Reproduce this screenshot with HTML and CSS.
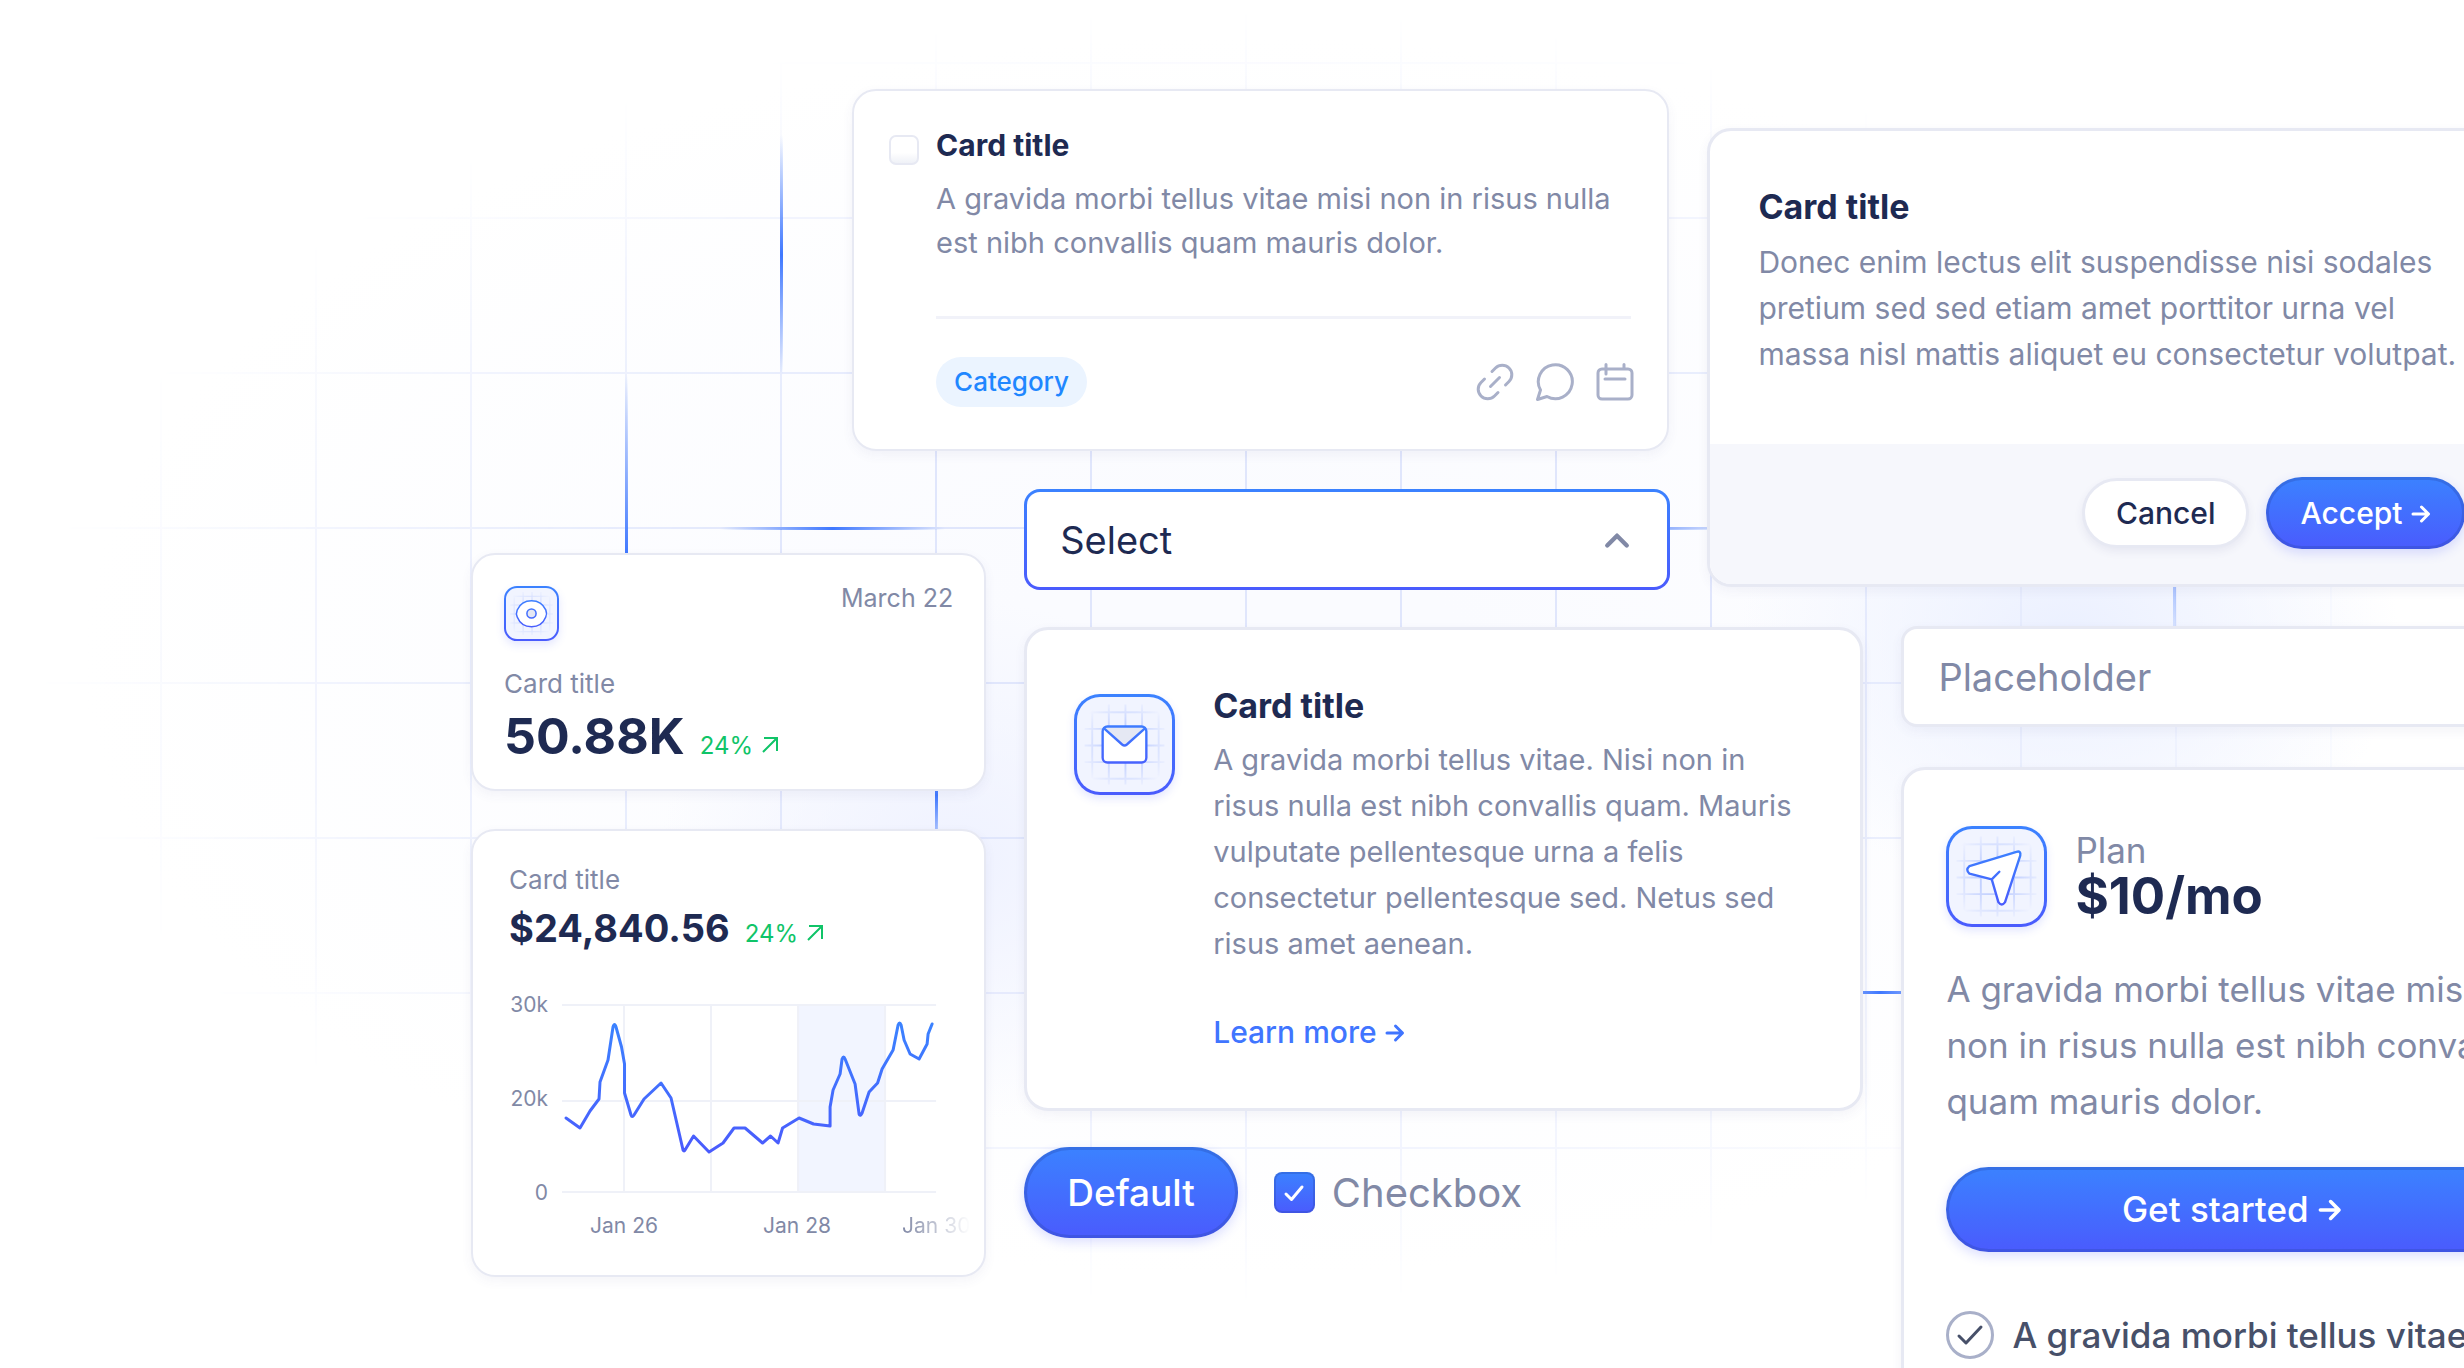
FILE: index.html
```html
<!DOCTYPE html>
<html lang="en">
<head>
<meta charset="utf-8">
<title>Components</title>
<link rel="stylesheet" href="styles.css">
</head>
<body>
<div class="backdrop" aria-hidden="true">
  <div class="lines"></div>
  <span class="beam beam-v beam-one"></span>
  <span class="beam beam-v beam-two"></span>
  <span class="beam beam-v beam-three"></span>
  <span class="beam beam-v beam-four"></span>
  <span class="beam beam-h beam-five"></span>
  <span class="beam beam-h beam-six"></span>
  <span class="beam beam-h beam-seven"></span>
</div>
<svg class="defs" aria-hidden="true">
  <defs>
    <linearGradient id="blue" gradientUnits="userSpaceOnUse" x1="0" y1="20" x2="0" y2="80"><stop offset="0" stop-color="#3b82ff"/><stop offset="1" stop-color="#4a5bfd"/></linearGradient>
    <linearGradient id="series" gradientUnits="userSpaceOnUse" x1="0" y1="20" x2="0" y2="148"><stop offset="0" stop-color="#3b82ff"/><stop offset="1" stop-color="#4a5bfd"/></linearGradient>
    <radialGradient id="fade"><stop offset="0.4" stop-color="#fff"/><stop offset="1" stop-color="#000"/></radialGradient>
    <mask id="soft"><rect width="100" height="100" fill="url(#fade)"/></mask>
    <symbol id="mesh" viewBox="0 0 100 100">
      <path mask="url(#soft)" d="M16 8V92M33.500 8V92M51 8V92M68.500 8V92M86 8V92M8 16H92M8 33.500H92M8 51H92M8 68.500H92M8 86H92" fill="none" stroke="#c3d1ff" stroke-width="2"/>
    </symbol>
    <symbol id="arrow" viewBox="0 0 20 20"><path d="M2 10H17M10.500 3L17.500 10L10.500 17" fill="none" stroke="currentColor" stroke-width="3" stroke-linecap="round" stroke-linejoin="round"/></symbol>
    <symbol id="rise" viewBox="0 0 18 18"><path d="M2 16L16 2M3 2H16V15" fill="none" stroke="currentColor" stroke-width="2"/></symbol>
  </defs>
</svg>

<main class="stage">
  <div class="cluster">
    <article class="card task">
      <input class="tick" type="checkbox" id="task" aria-label="Card title">
      <div class="task-main">
        <h2 class="title small"><label for="task">Card title</label></h2>
        <p class="text">A gravida morbi tellus vitae misi non in risus nulla est nibh convallis quam mauris dolor.</p>
        <div class="task-foot">
          <span class="tag">Category</span>
          <div class="tools">
            <button class="tool" type="button" aria-label="Link"><svg viewBox="0 0 40 40"><path d="M17 9.500L20.500 6A8.800 8.800 0 0 1 34 19.500L30.500 23M23 30.500L19.500 34A9 9 0 0 1 6 20.500L9.500 17M15.500 24.500L24.500 15.500"/></svg></button>
            <button class="tool" type="button" aria-label="Comment"><svg viewBox="0 0 40 40"><path d="M2.500 37.500L5.500 28A17 17 0 1 1 12 34.500Z"/></svg></button>
            <button class="tool" type="button" aria-label="Calendar"><svg viewBox="0 0 40 40"><path d="M7 7H33A4 4 0 0 1 37 11V33A4 4 0 0 1 33 37H7A4 4 0 0 1 3 33V11A4 4 0 0 1 7 7ZM11 2.500V12M29 2.500V7M10 17H30"/></svg></button>
          </div>
        </div>
      </div>
    </article>

    <div class="columns">
      <div class="column metrics">
        <article class="card metric">
          <div class="metric-head">
            <span class="badge badge-small"><svg viewBox="0 0 100 100"><use href="#mesh"/><path d="M50 25C66 25 74 34 78 43Q81 50 78 57C74 67 66 76 50 76S26 67 22 57Q19 50 22 43C26 34 34 25 50 25Z" fill="#fff" stroke="url(#blue)" stroke-width="3"/><circle cx="50" cy="50" r="9" fill="#e5e8f3" stroke="url(#blue)" stroke-width="3"/></svg></span>
            <time class="date">March 22</time>
          </div>
          <h3 class="label">Card title</h3>
          <p class="figure"><strong class="number large">50.88K</strong><span class="delta">24% <svg><use href="#rise"/></svg></span></p>
        </article>
        <article class="card revenue">
          <h3 class="label">Card title</h3>
          <p class="figure"><strong class="number">$24,840.56</strong><span class="delta">24% <svg><use href="#rise"/></svg></span></p>
          <div class="chart">
            <div class="axis-y"><span>30k</span><span>20k</span><span>0</span></div>
            <svg class="plot" viewBox="0 0 374 190" preserveAspectRatio="none" role="img" aria-label="Revenue">
              <rect x="236" y="0" width="87" height="189" fill="#f2f5ff"/>
              <path d="M0 1H374M0 97H374M0 188H374M62 0V189M149 0V189M236 0V189M323 0V189" stroke="#eff1f8" stroke-width="2"/>
              <path d="M4 114L18 124L28 107L37 95L38 78L46 56L51 23Q52.500 18 54 23L59.500 43L62.500 60V89L69 111Q70 114 72 111L82 95L99 79L109 94L121 146Q122 148 123 146L131.500 132L147 148L161 139L172 124H183L200.500 139L208.500 132L216 139L220.500 124L237 114L251.500 120L268 122V103L271 86L278 70L280 55Q281.500 51 283 55L293 80L297 110Q298 113 300 109L307 88L315.500 79L320 65L331 46L336 21Q337.500 17 339 21L342 36L348 50L357 55L365 40L366 30L370 20" fill="none" stroke="url(#series)" stroke-width="3" stroke-linejoin="round" stroke-linecap="round"/>
            </svg>
            <div class="axis-x"><span>Jan 26</span><span>Jan 28</span><span class="last">Jan 30</span></div>
          </div>
        </article>
      </div>

      <div class="column">
        <div class="picker">
          <select class="select" aria-label="Select"><option>Select</option></select>
          <svg class="chevron" viewBox="0 0 24 16"><path d="M3 13L12 4L21 13" fill="none" stroke="currentColor" stroke-width="4" stroke-linecap="round" stroke-linejoin="round"/></svg>
        </div>
        <article class="card feature">
          <span class="badge"><svg viewBox="0 0 100 100"><use href="#mesh"/><path d="M32 31H68A5 5 0 0 1 73 36V64A5 5 0 0 1 68 69H32A5 5 0 0 1 27 64V36A5 5 0 0 1 32 31Z" fill="#fff"/><path d="M29 32H71L52 50Q50 51.500 48 50Z" fill="#e5e8f3"/><path d="M32 31H68A5 5 0 0 1 73 36V64A5 5 0 0 1 68 69H32A5 5 0 0 1 27 64V36A5 5 0 0 1 32 31ZM28.500 33L47.500 50Q50 52 52.500 50L71.500 33" fill="none" stroke="url(#blue)" stroke-width="2.500"/></svg></span>
          <div class="feature-main">
            <h2 class="title">Card title</h2>
            <p class="text">A gravida morbi tellus vitae. Nisi non in risus nulla est nibh convallis quam. Mauris vulputate pellentesque urna a felis consectetur pellentesque sed. Netus sed risus amet aenean.</p>
            <a class="more" href="#">Learn more <svg><use href="#arrow"/></svg></a>
          </div>
        </article>
        <div class="controls">
          <button class="button primary big" type="button">Default</button>
          <label class="check"><span class="check-box"><input type="checkbox" checked><svg viewBox="0 0 24 24"><path d="M4 13L9.500 18.500L20 6" fill="none" stroke="#fff" stroke-width="3" stroke-linecap="round" stroke-linejoin="round"/></svg></span>Checkbox</label>
        </div>
      </div>
    </div>
  </div>

  <div class="side">
    <article class="card dialog">
      <div class="dialog-main">
        <h2 class="title">Card title</h2>
        <p class="text">Donec enim lectus elit suspendisse nisi sodales pretium sed sed etiam amet porttitor urna vel massa nisl mattis aliquet eu consectetur volutpat.</p>
      </div>
      <div class="dialog-foot">
        <button class="button plain" type="button">Cancel</button>
        <button class="button primary" type="button">Accept <svg><use href="#arrow"/></svg></button>
      </div>
    </article>
    <input class="field" type="text" placeholder="Placeholder" aria-label="Placeholder">
    <article class="card plan">
      <div class="plan-head">
        <span class="badge"><svg viewBox="0 0 100 100"><use href="#mesh"/><path d="M71 24Q76 22.500 75 28L59 77Q55.500 82 52 77L45 53L21.500 47Q17 43 21.500 39Z" fill="#fff"/><path d="M71 24Q76 22.500 75 28L59 77Q55.500 82 52 77L45 53L21.500 47Q17 43 21.500 39ZM45 53L53 45" fill="none" stroke="url(#blue)" stroke-width="2.500" stroke-linecap="round" stroke-linejoin="round"/></svg></span>
        <div>
          <h3 class="plan-name">Plan</h3>
          <p class="price">$10/mo</p>
        </div>
      </div>
      <p class="lead">A gravida morbi tellus vitae misi non in risus nulla est nibh convallis quam mauris dolor.</p>
      <button class="button primary wide" type="button">Get started <svg><use href="#arrow"/></svg></button>
      <ul class="perks">
        <li><svg viewBox="0 0 48 48"><circle cx="24" cy="24" r="22.500" fill="#fff" stroke="#a9b0c9" stroke-width="3"/><path d="M13 25L20 32L35 16" fill="none" stroke="#475069" stroke-width="3" stroke-linecap="round" stroke-linejoin="round"/></svg>A gravida morbi tellus vitae</li>
      </ul>
    </article>
  </div>
</main>
</body>
</html>
```
FILE: styles.css
```css
:root {
  --ink: #1e2a52;
  --muted: #8189a6;
  --edge: #e7e9f3;
  --blue: #4075ff;
  --green: #10c468;
  --fill: linear-gradient(#3b82ff, #4a5bfd);
}

* { box-sizing: border-box; }

html { height: 100%; }

body {
  position: relative;
  height: 100%;
  margin: 0;
  overflow: hidden;
  background: #fff;
  color: var(--ink);
  font-family: Inter, "Liberation Sans", sans-serif;
}

h2, h3, p, ul { margin: 0; padding: 0; }
button, input, select { font: inherit; }
.defs { position: absolute; width: 0; height: 0; }

/* Backdrop: faint grid, tinted glow and bright line segments */
.backdrop {
  position: absolute;
  inset: 0;
  background:
    radial-gradient(ellipse 300px 260px at 960px 860px, #eff2ff, transparent),
    radial-gradient(ellipse 330px 260px at 2070px 640px, #ebf0ff, transparent),
    radial-gradient(ellipse 1150px 620px at 50% 48%, #fafbff 20%, transparent);
}

.lines {
  position: absolute;
  inset: 0;
  background:
    linear-gradient(90deg, #e0e6fc 2px, transparent 2px) 5px 0 / 155px 155px,
    linear-gradient(#e0e6fc 2px, transparent 2px) 0 62px / 155px 155px;
  -webkit-mask-image: radial-gradient(ellipse 1200px 650px at 50% 48%, #000 40%, transparent);
  mask-image: radial-gradient(ellipse 1200px 650px at 50% 48%, #000 40%, transparent);
}

.beam { position: absolute; }
.beam-v { width: 3px; background: linear-gradient(transparent, #3f78ff, transparent); }
.beam-h { height: 3px; background: linear-gradient(90deg, transparent, #3f78ff, transparent); }
.beam-one { left: 780px; top: 135px; height: 240px; }
.beam-two { left: 625px; top: 375px; height: 360px; }
.beam-three { left: 935px; top: 740px; height: 110px; }
.beam-four { left: 2173px; top: 460px; height: 190px; opacity: 0.6; }
.beam-five { left: 720px; top: 527px; width: 225px; }
.beam-six { left: 1600px; top: 527px; width: 130px; opacity: 0.5; }
.beam-seven { left: 1800px; top: 991px; width: 160px; }

/* Page composition; the right side runs past the window edge */
.stage {
  position: relative;
  display: grid;
  grid-template-columns: 433fr 1392fr 661fr;
  column-gap: 38px;
  width: 104%;
}

.cluster { grid-column: 2; padding-top: 89px; }
.side { grid-column: 3; padding-top: 128px; }

.columns {
  display: grid;
  grid-template-columns: 515fr 839fr;
  gap: 38px;
  align-items: start;
  margin-top: 38px;
}

.metrics { padding-top: 64px; }

.card {
  background: #fff;
  border: 2px solid var(--edge);
  border-radius: 24px;
  box-shadow: 0 4px 12px rgba(60, 70, 130, 0.06);
}

.title { font-size: 34px; font-weight: 700; line-height: 44px; }
.title.small { font-size: 30px; }
.text { color: var(--muted); font-size: 29px; line-height: 46px; }
.label { color: var(--muted); font-size: 26px; font-weight: 400; line-height: 32px; }

/* Task card */
.task {
  display: flex;
  gap: 17px;
  margin: 0 194px 0 381px;
  padding: 32px 36px 42px 35px;
}

.tick {
  appearance: none;
  flex: none;
  width: 30px;
  height: 30px;
  margin: 12px 0 0;
  border: 2px solid var(--edge);
  border-radius: 7px;
  background: linear-gradient(#fff 60%, #eff1f7);
}

.task-main { flex: 1; }
.task .text { margin-top: 10px; line-height: 44px; }

.task-foot {
  display: flex;
  align-items: center;
  justify-content: space-between;
  margin-top: 51px;
  padding-top: 38px;
  border-top: 3px solid #f1f2f9;
}

.tag {
  padding: 0 18px;
  border-radius: 25px;
  background: #ebf4ff;
  color: #1f87ff;
  font-size: 26px;
  font-weight: 500;
  line-height: 50px;
}

.tools { display: flex; gap: 20px; margin-right: -4px; }
.tool { width: 40px; height: 40px; padding: 0; border: 0; background: none; color: #a9b0c9; }
.tool svg {
  display: block;
  width: 40px;
  height: 40px;
  fill: none;
  stroke: currentColor;
  stroke-width: 3;
  stroke-linecap: round;
  stroke-linejoin: round;
}

/* Square icon badge */
.badge {
  display: block;
  flex: none;
  width: 101px;
  height: 101px;
  border: 3px solid transparent;
  border-radius: 26px;
  background: linear-gradient(#f1f4ff, #f1f4ff) padding-box, var(--fill) border-box;
  box-shadow: 0 4px 8px rgba(74, 91, 253, 0.15);
}

.badge svg { display: block; width: 100%; height: 100%; }
.badge-small { width: 55px; height: 55px; border-width: 2px; border-radius: 13px; }

/* Metric cards */
.metric { padding: 31px 31px 17px; }
.metric-head { display: flex; justify-content: space-between; }
.date { color: var(--muted); font-size: 25px; line-height: 24px; }
.metric .label { margin-top: 27px; }
.figure { display: flex; align-items: baseline; gap: 15px; }
.number { font-size: 38px; font-weight: 700; line-height: 60px; }
.number.large { font-size: 50px; line-height: 72px; }
.delta { color: var(--green); font-size: 24px; }
.delta svg { width: 18px; height: 18px; margin-left: 1px; }

.revenue { margin-top: 38px; padding: 33px 16px 37px 36px; }
.revenue .figure { margin-top: 2px; }

.chart {
  display: grid;
  grid-template-columns: 39px 1fr 18px;
  column-gap: 14px;
  margin-top: 35px;
  color: var(--muted);
  font-size: 21px;
  line-height: 24px;
}

.axis-y { display: flex; flex-direction: column; justify-content: space-between; height: 212px; text-align: right; }
.plot { width: 100%; height: 190px; margin-top: 11px; overflow: visible; }
.axis-x { display: grid; grid-column: 2 / 4; grid-template-columns: 173px 139px 1fr; margin-top: 9px; padding-left: 28px; }
.last { -webkit-mask-image: linear-gradient(90deg, #000, transparent); mask-image: linear-gradient(90deg, #000, transparent); white-space: nowrap; }

/* Select */
.picker { position: relative; width: 77%; }

.select {
  display: block;
  appearance: none;
  width: 100%;
  height: 101px;
  padding: 0 33px;
  border: 3px solid transparent;
  border-radius: 16px;
  background: linear-gradient(#fff, #fff) padding-box, var(--fill) border-box;
  color: var(--ink);
  font-size: 38px;
}

.chevron { position: absolute; right: 40px; top: 42px; width: 26px; height: 18px; color: var(--muted); }

/* Feature card */
.feature { display: flex; gap: 38px; margin-top: 37px; padding: 54px 60px 53px 47px; border-width: 3px; }
.feature .badge { margin-top: 10px; }
.feature .text { margin-top: 9px; }
.more { display: inline-block; margin-top: 42px; color: var(--blue); font-size: 30px; font-weight: 500; line-height: 46px; text-decoration: none; }
.more svg { width: 20px; height: 20px; }

/* Buttons */
.button {
  border: 3px solid rgba(40, 70, 170, 0.3);
  border-radius: 50px;
  font-size: 30px;
  font-weight: 500;
  line-height: 34px;
}

.button svg { width: 20px; height: 20px; }
.primary { padding: 16px 31px; background: var(--fill) border-box; color: #fff; box-shadow: 0 4px 12px rgba(74, 91, 253, 0.2); }
.plain { padding: 15px 31px; border-color: var(--edge); background: #fff; color: var(--ink); box-shadow: 0 4px 8px rgba(60, 70, 130, 0.08); }
.big { padding: 20px 40px; font-size: 37px; line-height: 45px; }
.wide { width: 100%; margin-top: 38px; padding: 18px 32px; font-size: 35px; line-height: 43px; }
.wide svg { width: 24px; height: 24px; }

.controls { display: flex; align-items: center; gap: 36px; margin-top: 36px; }
.check { display: flex; align-items: center; gap: 17px; color: var(--muted); font-size: 40px; line-height: 48px; }
.check-box { display: grid; width: 41px; height: 41px; place-items: center; }
.check-box > * { grid-area: 1 / 1; }
.check-box input {
  appearance: none;
  width: 41px;
  height: 41px;
  margin: 0;
  border: 2px solid rgba(40, 70, 170, 0.3);
  border-radius: 8px;
  background: var(--fill) border-box;
}
.check-box svg { position: relative; width: 24px; height: 24px; }

/* Dialog */
.dialog { margin-left: -194px; overflow: hidden; border-width: 3px; }
.dialog-main { padding: 54px 90px 67px 48px; }
.dialog .text { margin-top: 10px; font-size: 30px; }
.dialog-foot { display: flex; align-items: center; justify-content: flex-end; gap: 17px; padding: 33px 95px 35px; background: #f6f7fc; }

.field {
  display: block;
  width: 100%;
  height: 101px;
  margin-top: 39px;
  padding: 0 34px;
  border: 3px solid var(--edge);
  border-radius: 16px;
  background: #fff;
  font-size: 38px;
  box-shadow: 0 4px 12px rgba(60, 70, 130, 0.06);
}
.field::placeholder { color: var(--muted); opacity: 1; }

/* Plan */
.plan { margin-top: 40px; padding: 56px 42px 80px; border-width: 3px; }
.plan-head { display: flex; gap: 28px; }
.plan-name { color: var(--muted); font-size: 35px; font-weight: 400; line-height: 48px; }
.price { font-size: 51px; font-weight: 700; line-height: 44px; }
.lead { margin: 34px -24px 0 0; color: var(--muted); font-size: 35px; line-height: 56px; }
.perks { margin-top: 57px; list-style: none; }
.perks li { display: flex; align-items: center; gap: 18px; color: #475069; font-size: 35px; font-weight: 500; line-height: 52px; }
.perks svg { flex: none; width: 48px; height: 48px; }
```
